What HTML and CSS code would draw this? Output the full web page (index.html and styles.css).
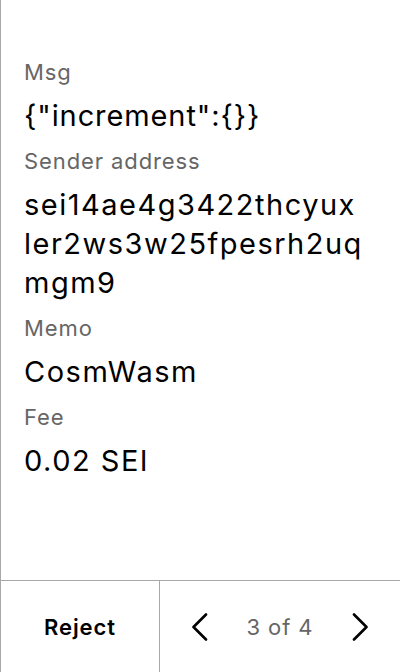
FILE: index.html
```html
<!DOCTYPE html>
<html>
<head>
<meta charset="utf-8">
<link rel="stylesheet" href="styles.css">
</head>
<body>
<div class="screen">
  <div class="content">
    <div class="field">
      <div class="label">Msg</div>
      <div class="value tight">{"increment":{}}</div>
    </div>
    <div class="field">
      <div class="label">Sender address</div>
      <div class="value address">sei14ae4g3422thcyux<wbr>ler2ws3w25fpesrh2uq<wbr>mgm9</div>
    </div>
    <div class="field">
      <div class="label">Memo</div>
      <div class="value">CosmWasm</div>
    </div>
    <div class="field">
      <div class="label">Fee</div>
      <div class="value">0.02 SEI</div>
    </div>
  </div>
  <div class="footer">
    <div class="reject">Reject</div>
    <div class="pager">
      <svg class="chev" width="16" height="28" viewBox="0 0 16 28"><path d="M14 1.5 L1.5 14 L14 26.5" fill="none" stroke="#000" stroke-width="2.6" stroke-linecap="round" stroke-linejoin="round"/></svg>
      <span class="count">3 of 4</span>
      <svg class="chev" width="16" height="28" viewBox="0 0 16 28"><path d="M2 1.5 L14.5 14 L2 26.5" fill="none" stroke="#000" stroke-width="2.6" stroke-linecap="round" stroke-linejoin="round"/></svg>
    </div>
  </div>
</div>
</body>
</html>
```

FILE: styles.css
```css
* { box-sizing: border-box; }
html, body { margin: 0; padding: 0; background: #fff; }
body { font-family: Inter, "Noto Sans", sans-serif; color: #000; }
.screen {
  width: 400px;
  height: 672px;
  border-left: 1px solid #a8a8a8;
  display: flex;
  flex-direction: column;
}
.content {
  flex: 1;
  padding: 58px 24px 0 23px;
  display: flex;
  flex-direction: column;
  gap: 12px;
}
.field { display: flex; flex-direction: column; gap: 10px; }
.label { font-size: 22px; line-height: 28px; letter-spacing: 0.9px; color: #666; }
.value { font-size: 29px; line-height: 39px; letter-spacing: 1.5px; color: #000; }
.value.tight { letter-spacing: 0.9px; }
.address { overflow-wrap: anywhere; }
.footer {
  height: 92px;
  border-top: 1px solid #a8a8a8;
  display: flex;
}
.reject {
  width: 159px;
  border-right: 1px solid #a8a8a8;
  display: flex;
  align-items: center;
  justify-content: center;
  font-size: 22px;
  font-weight: 600;
  letter-spacing: 0.9px;
}
.pager {
  flex: 1;
  display: flex;
  align-items: center;
  justify-content: space-between;
  padding: 0 32px 0 32px;
}
.count { font-size: 22px; letter-spacing: 0.9px; color: #666; }
.chev { display: block; }
```
